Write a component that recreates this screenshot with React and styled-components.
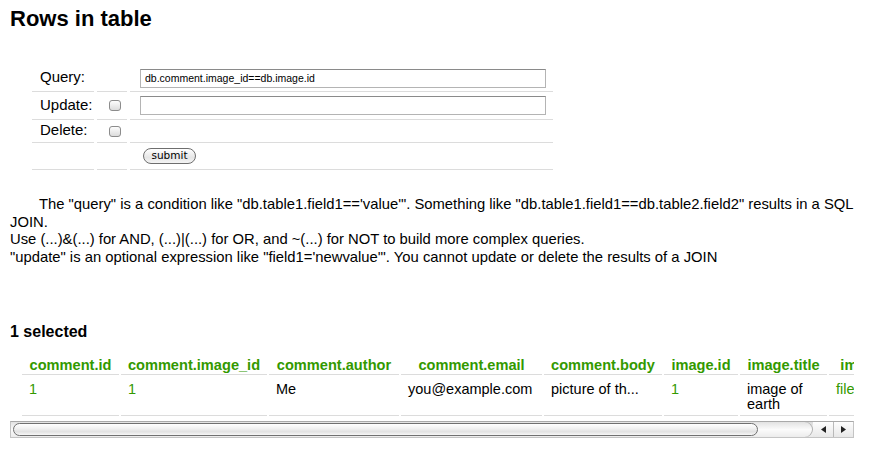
import React from 'react';
import styled, { createGlobalStyle } from 'styled-components';

const GREEN = '#339900';

const GlobalStyle = createGlobalStyle`
  body {
    margin: 0;
    background: #fff;
    color: #000;
    font-family: "Liberation Sans", Arial, Helvetica, sans-serif;
  }
`;

const Page = styled.div`
  padding: 0 10px;
`;

const Title = styled.h2`
  margin: 6px 0 0;
  font-size: 22px;
  line-height: 25px;
  font-weight: bold;
`;

const FormTable = styled.table`
  margin: 34px 0 0 19px;
  border-collapse: separate;
  border-spacing: 3px 0;
`;

const FormCell = styled.td`
  width: ${p => p.$w}px;
  height: ${p => p.$h}px;
  padding: 0;
  padding-left: ${p => p.$pl || 0}px;
  box-sizing: border-box;
  border-bottom: 1px solid #dcdcdc;
  vertical-align: middle;
`;

const Label = styled.span`
  font-size: 15px;
  position: relative;
  top: -1px;
`;

const TextInput = styled.input`
  display: block;
  width: 406px;
  height: ${p => p.$h}px;
  box-sizing: border-box;
  margin: 0;
  padding: 0 0 0 4px;
  border: 1px solid #b4b4b4;
  border-top-color: #8a8a8a;
  font-family: "Liberation Sans", Arial, sans-serif;
  font-size: 10.5px;
  line-height: 16px;
  color: #000;
  background: #fff;
  outline: none;
`;

const Check = styled.input`
  appearance: none;
  display: block;
  width: 12px;
  height: 11px;
  margin: 0;
  border: 1px solid #8c8c8c;
  border-radius: 3px;
  background: linear-gradient(#fdfdfd, #dcdcdc);
  box-sizing: border-box;
`;

const SubmitButton = styled.button`
  display: block;
  margin-left: 13px;
  width: 53px;
  height: 16px;
  padding: 0 0 1px;
  border: 1px solid #6e6e6e;
  border-radius: 8px;
  background: linear-gradient(#ffffff, #e6e6e6 60%, #f4f4f4);
  font-family: "DejaVu Sans", Verdana, sans-serif;
  font-size: 10.5px;
  color: #000;
  line-height: 13px;
`;

const Help = styled.p`
  margin: 26px 0 0;
  font-size: 14.8px;
  line-height: 17.5px;
  text-indent: 29px;
  padding-right: 4px;
`;

const Selected = styled.h3`
  margin: 56px 0 0;
  font-size: 16px;
  line-height: 19px;
  font-weight: bold;
`;

const Scroller = styled.div`
  margin-top: 10px;
  width: 844px;
  overflow: hidden;
`;

const Results = styled.table`
  margin-left: 10px;
  border-collapse: separate;
  border-spacing: 2px;
  table-layout: fixed;
  width: max-content;
`;

const Th = styled.th`
  width: ${p => p.$w}px;
  box-sizing: border-box;
  padding: 4px 3px 0;
  line-height: 17px;
  font-size: 14.6px;
  font-weight: bold;
  color: ${GREEN};
  text-align: center;
  white-space: nowrap;
  border-bottom: 1px solid #dcdcdc;
`;

const Td = styled.td`
  box-sizing: border-box;
  padding: 5px 7px 3px;
  line-height: 15px;
  font-size: 14.5px;
  vertical-align: top;
  text-align: left;
  color: ${p => (p.$link ? GREEN : '#000')};
  white-space: ${p => (p.$wrap ? 'normal' : 'nowrap')};
  border-bottom: 1px solid #dcdcdc;
`;

const ScrollBar = styled.div`
  display: flex;
  align-items: stretch;
  width: 844px;
  height: 17px;
  margin-top: 3px;
  box-sizing: border-box;
  border: 1px solid #c4c4c4;
  border-top-color: #a9a9a9;
  background: linear-gradient(#d9d9d9, #f6f6f6 45%, #eaeaea);
`;

const Track = styled.div`
  flex: 1;
  display: flex;
  align-items: stretch;
  padding: 1px 0 1px 2px;
  border-radius: 0 9px 9px 0;
  background: linear-gradient(#e2e2e2, #fbfbfb 50%, #ececec);
  box-shadow: inset -1px 0 0 #b0b0b0;
`;

const Thumb = styled.div`
  width: 745px;
  box-sizing: border-box;
  border: 1px solid #707070;
  border-radius: 8px;
  background: linear-gradient(#ffffff, #f1f1f1 40%, #e2e2e2 70%, #f7f7f7);
`;

const Arrow = styled.div`
  width: 19px;
  display: flex;
  align-items: center;
  justify-content: center;
  border-left: 1px solid ${p => (p.$first ? 'transparent' : '#b9b9b9')};
  background: linear-gradient(#fdfdfd, #e8e8e8);
`;

const columns = [
  { name: 'comment.id', w: 97 },
  { name: 'comment.image_id', w: 146 },
  { name: 'comment.author', w: 130 },
  { name: 'comment.email', w: 141 },
  { name: 'comment.body', w: 118 },
  { name: 'image.id', w: 74 },
  { name: 'image.title', w: 87 },
  { name: 'image.file', w: 90 },
];

const row = [
  { v: '1', link: true },
  { v: '1', link: true },
  { v: 'Me' },
  { v: 'you@example.com' },
  { v: 'picture of th...' },
  { v: '1', link: true },
  { v: 'image of earth', wrap: true },
  { v: 'file', link: true },
];

const Tri = ({ dir }) => (
  <svg width="5" height="7" viewBox="0 0 5 7">
    {dir === 'left'
      ? <path d="M5 0 L0 3.5 L5 7 Z" fill="#222" />
      : <path d="M0 0 L5 3.5 L0 7 Z" fill="#222" />}
  </svg>
);

export default function App() {
  return (
    <Page>
      <GlobalStyle />
      <Title>Rows in table</Title>

      <FormTable>
        <tbody>
          <tr>
            <FormCell $w={62} $h={27} $pl={8}><Label>Query:</Label></FormCell>
            <FormCell $w={30} $h={27} />
            <FormCell $w={423} $h={27} $pl={10}>
              <TextInput $h={19} defaultValue="db.comment.image_id==db.image.id" />
            </FormCell>
          </tr>
          <tr>
            <FormCell $w={62} $h={28} $pl={8}><Label>Update:</Label></FormCell>
            <FormCell $w={30} $h={28} $pl={12}><Check type="checkbox" /></FormCell>
            <FormCell $w={423} $h={28} $pl={10}>
              <TextInput $h={19} defaultValue="" />
            </FormCell>
          </tr>
          <tr>
            <FormCell $w={62} $h={23} $pl={8}><Label>Delete:</Label></FormCell>
            <FormCell $w={30} $h={23} $pl={12}><Check type="checkbox" /></FormCell>
            <FormCell $w={423} $h={23} />
          </tr>
          <tr>
            <FormCell $w={62} $h={27} />
            <FormCell $w={30} $h={27} />
            <FormCell $w={423} $h={27}>
              <SubmitButton type="button">submit</SubmitButton>
            </FormCell>
          </tr>
        </tbody>
      </FormTable>

      <Help>
        The "query" is a condition like "db.table1.field1=='value'". Something like
        "db.table1.field1==db.table2.field2" results in a SQL JOIN.<br />
        Use (...)&amp;(...) for AND, (...)|(...) for OR, and ~(...) for NOT to build more complex queries.<br />
        "update" is an optional expression like "field1='newvalue'". You cannot update or delete the results of a JOIN
      </Help>

      <Selected>1 selected</Selected>

      <Scroller>
        <Results>
          <thead>
            <tr>
              {columns.map(c => (
                <Th key={c.name} $w={c.w}>{c.name}</Th>
              ))}
            </tr>
          </thead>
          <tbody>
            <tr>
              {row.map((c, i) => (
                <Td key={i} $link={c.link} $wrap={c.wrap}>{c.v}</Td>
              ))}
            </tr>
          </tbody>
        </Results>
      </Scroller>

      <ScrollBar>
        <Track>
          <Thumb />
        </Track>
        <Arrow $first><Tri dir="left" /></Arrow>
        <Arrow><Tri dir="right" /></Arrow>
      </ScrollBar>
    </Page>
  );
}
